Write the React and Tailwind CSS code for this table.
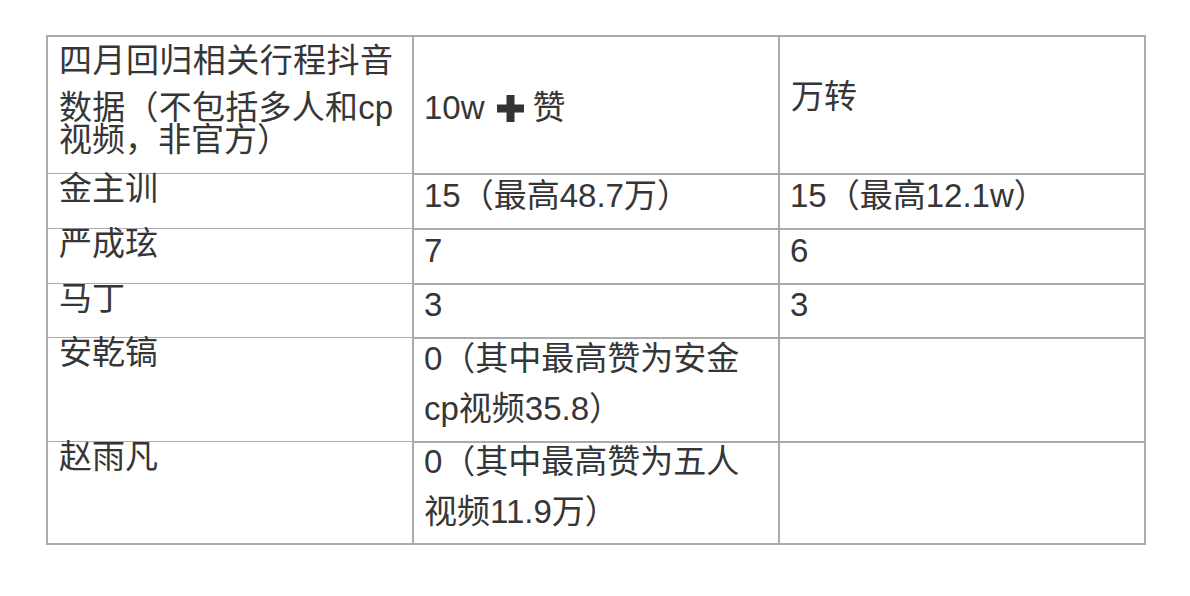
import React from "react";

const font = { fontFamily: '"Liberation Sans", "Noto Sans CJK SC", sans-serif' };

function Plus() {
  return (
    <svg width="27" height="27" viewBox="0 0 27 27" className="inline-block align-[-3px] ml-[12px] mr-[9px]">
      <rect x="9.5" y="0" width="8" height="27" fill="#333" />
      <rect x="0" y="9.5" width="27" height="8" fill="#333" />
    </svg>
  );
}

function NameCell({ children }) {
  return (
    <div className="bg-white pl-[11px] pr-[18px] leading-[30px] -mt-[1px]">{children}</div>
  );
}

function ValCell({ children }) {
  return (
    <div className="bg-white pl-[10px] pr-[14px] pb-3 flex flex-col justify-center leading-[50px]">
      <div>{children}</div>
    </div>
  );
}

export default function App() {
  return (
    <div className="w-[1190px] h-[596px] bg-white pt-[35px] pl-[46px]" style={font}>
      <div className="w-[1100px] grid grid-cols-3 grid-rows-[136px_53px_53px_52px_102px_100px] gap-[2px] p-[2px] bg-[#ababab] text-[33px] text-[#363636]">
        <div className="bg-white pl-[11px] pr-[19px] pt-[9px] leading-[30px]">
          <div className="text-justify [text-align-last:justify]">四月回归相关行程抖音</div>
          <div className="mt-[17px] text-justify [text-align-last:justify] whitespace-nowrap">数据（不包括多人和cp</div>
          <div className="mt-[2px]">视频，非官方）</div>
        </div>
        <div className="bg-white pl-[10px] pt-[6px] flex flex-col justify-center leading-[50px]">
          <div>10w<Plus />赞</div>
        </div>
        <div className="bg-white pl-[11px] pb-[16px] flex flex-col justify-center leading-[50px]">
          <div>万转</div>
        </div>

        <NameCell>金主训</NameCell>
        <ValCell>15（最高48.7万）</ValCell>
        <ValCell>15（最高12.1w）</ValCell>

        <NameCell>严成玹</NameCell>
        <ValCell>7</ValCell>
        <ValCell>6</ValCell>

        <NameCell>马丁</NameCell>
        <ValCell>3</ValCell>
        <ValCell>3</ValCell>

        <NameCell>安乾镐</NameCell>
        <ValCell>
          0（其中最高赞为安金<br />cp视频35.8）
        </ValCell>
        <div className="bg-white" />

        <NameCell>赵雨凡</NameCell>
        <ValCell>
          0（其中最高赞为五人<br />视频11.9万）
        </ValCell>
        <div className="bg-white" />
      </div>
    </div>
  );
}
